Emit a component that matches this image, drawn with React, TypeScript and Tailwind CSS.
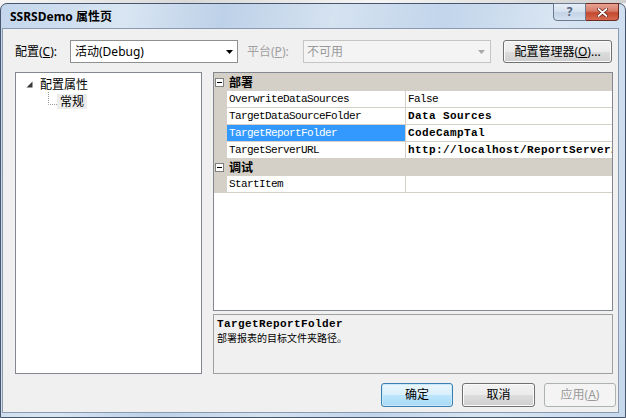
import type { ReactNode } from "react";

const ui = "font-['Noto_Sans','Noto_Sans_CJK_SC',sans-serif]";
const mono = "font-['Liberation_Mono','Noto_Sans_CJK_SC',monospace]";

function DropArrow({ color = "#000" }: { color?: string }) {
  return (
    <svg width="7" height="4" viewBox="0 0 7 4">
      <path d="M0 0h7L3.5 4z" fill={color} />
    </svg>
  );
}

function Button({
  children,
  w,
  kind = "normal",
}: {
  children: ReactNode;
  w: string;
  kind?: "normal" | "default" | "disabled";
}) {
  const look =
    kind === "default"
      ? "border-[#3c7fb1] bg-[linear-gradient(#eaf6fd_0%,#d9f0fc_50%,#bee6fd_50%,#a7d9f5_100%)] text-black shadow-[inset_0_0_0_1px_#c9e9fb]"
      : kind === "disabled"
        ? "border-[#adb2b5] bg-[#f4f4f4] text-[#9a9a9a]"
        : "border-[#707070] bg-[linear-gradient(#f2f2f2_0%,#ebebeb_50%,#dddddd_50%,#cfcfcf_100%)] text-black shadow-[inset_0_0_0_1px_#fbfbfb]";
  return (
    <div
      className={`${w} flex h-full items-center justify-center rounded-[3px] border text-[12px] ${look}`}
    >
      {children}
    </div>
  );
}

function Category({ label }: { label: string }) {
  return (
    <div className="flex h-[17px] items-center bg-[#d4d0c8]">
      <span className="ml-[1px] flex h-[9px] w-[9px] items-center justify-center border border-[#808080] bg-white">
        <span className="h-px w-[5px] bg-black" />
      </span>
      <span className={`${ui} ml-[5px] text-[12px] leading-[17px] font-bold text-black`}>{label}</span>
    </div>
  );
}

function PropRow({
  name,
  value,
  bold,
  selected,
}: {
  name: string;
  value: string;
  bold?: boolean;
  selected?: boolean;
}) {
  return (
    <div className="flex h-[17px]">
      <div className="w-[13px] shrink-0 bg-[#d4d0c8]" />
      <div
        className={`w-[179px] shrink-0 border-r border-b border-[#d4d0c8] pl-[2px] leading-[16px] tracking-[-0.6px] ${
          selected ? "bg-[#3399ff] text-white" : "bg-white text-black"
        }`}
      >
        {name}
      </div>
      <div
        className={`min-w-0 flex-1 overflow-hidden border-b border-[#d4d0c8] bg-white pl-[2px] leading-[16px] whitespace-nowrap ${
          bold ? "font-bold tracking-[0.4px]" : "tracking-[-0.6px]"
        }`}
      >
        {value}
      </div>
    </div>
  );
}

export default function App() {
  return (
    <div className={`${ui} h-[418px] w-[626px] overflow-hidden bg-[#eef0f3] text-black`}>
      {/* window behind */}
      <div className="h-[3px] bg-[linear-gradient(90deg,#f5f5f5,#d9d9d9_30%,#f5f5f5_60%,#cfcfcf)]" />

      {/* dialog frame */}
      <div className="flex h-[415px] flex-col rounded-t-[7px] border border-[#48566b] bg-[linear-gradient(100deg,#c3d6ec_0%,#d9e5f2_18%,#bdd1e8_32%,#d5e2f0_48%,#c2d5eb_64%,#d9e5f2_80%,#c6d8ec_100%)]">
        {/* title bar */}
        <div className="flex h-[24px] items-start pr-[6px]">
          <div className="pt-[5px] pl-[9px] text-[12px] leading-[15px] font-bold text-black">
            SSRSDemo 属性页
          </div>
          <div className="mt-[-1px] ml-auto flex h-[18px]">
            <div className="flex w-[33px] items-center justify-center rounded-bl-[4px] border border-[#6a7a90] bg-[linear-gradient(#e6eef7_0%,#d6e2ef_45%,#c3d3e6_55%,#d4e1ef_100%)] text-[12px] leading-none font-bold text-[#54657d]">
              ?
            </div>
            <div className="flex w-[33px] items-center justify-center rounded-br-[4px] border border-l-0 border-[#6b2a22] bg-[linear-gradient(#e8a393_0%,#d57a66_45%,#c3482f_55%,#d66a4f_100%)]">
              <svg width="11" height="9" viewBox="0 0 11 9">
                <path d="M1.5 1l8 7M9.5 1l-8 7" stroke="#5a1a12" strokeWidth="3.2" strokeLinecap="round" />
                <path d="M1.5 1l8 7M9.5 1l-8 7" stroke="#fff" strokeWidth="1.8" strokeLinecap="round" />
              </svg>
            </div>
          </div>
        </div>

        {/* client area */}
        <div className="mr-[6px] mb-[4px] ml-[1px] flex flex-1 flex-col border border-[#8a9bb1] bg-[#f0f0f0]">
          {/* configuration row */}
          <div className="mt-[11px] flex h-[23px] items-center pl-[12px] text-[12px]">
            <span className="w-[55px]">
              配置(<span className="underline">C</span>):
            </span>
            <div className="flex h-full w-[168px] items-center border border-[#8e8f8f] bg-white pr-[4px] pl-[4px]">
              <span>活动(Debug)</span>
              <span className="ml-auto">
                <DropArrow />
              </span>
            </div>
            <span className="ml-[9px] w-[56px] text-[#a0a0a0]">
              平台(<span className="underline">P</span>):
            </span>
            <div className="flex h-full w-[188px] items-center border border-[#c5c5c5] bg-[#f4f4f4] pr-[5px] pl-[3px] text-[#9a9a9a]">
              <span>不可用</span>
              <span className="ml-auto">
                <DropArrow color="#a8a8a8" />
              </span>
            </div>
            <div className="ml-[12px] h-full">
              <Button w="w-[109px]">
                配置管理器(<span className="underline">O</span>)...
              </Button>
            </div>
          </div>

          {/* main area */}
          <div className="mt-[9px] flex h-[302px] pl-[12px]">
            {/* tree */}
            <div className="w-[187px] border border-[#828790] bg-white pt-[3px] text-[12px]">
              <div className="flex h-[17px] items-center pl-[10px]">
                <svg width="7" height="7" viewBox="0 0 7 7">
                  <path d="M6.5 0.5V6.5H0.5Z" fill="#3a3a3a" />
                </svg>
                <span className="ml-[7px] leading-[17px]">配置属性</span>
              </div>
              <div className="flex h-[17px] items-center pl-[32px]">
                <svg width="9" height="17" viewBox="0 0 9 17" className="mt-[-3px]">
                  <path d="M0.5 0V12.5H9" stroke="#9a9a9a" strokeDasharray="1 1" fill="none" />
                </svg>
                <span className="bg-[#ececec] px-[3px] leading-[15px]">常规</span>
              </div>
            </div>

            {/* right column */}
            <div className="ml-[11px] flex w-[400px] flex-col gap-[3px]">
              {/* property grid */}
              <div className={`${mono} flex-1 border border-[#828790] bg-white text-[11px]`}>
                <div className="h-px bg-[#d4d0c8]" />
                <Category label="部署" />
                <PropRow name="OverwriteDataSources" value="False" />
                <PropRow name="TargetDataSourceFolder" value="Data Sources" bold />
                <PropRow name="TargetReportFolder" value="CodeCampTal" bold selected />
                <PropRow name="TargetServerURL" value="http://localhost/ReportServer2008" bold />
                <Category label="调试" />
                <PropRow name="StartItem" value="" />
              </div>

              {/* description */}
              <div className="h-[60px] border border-[#a0a0a0] bg-[#f0f0f0] pt-[3px] pl-[3px]">
                <div className={`${mono} text-[11px] leading-[13px] font-bold tracking-[0.4px]`}>
                  TargetReportFolder
                </div>
                <div className="text-[10px] leading-[15px]">部署报表的目标文件夹路径。</div>
              </div>
            </div>
          </div>

          {/* buttons */}
          <div className="mt-[9px] flex h-[24px] justify-end gap-[9px] pr-[2px]">
            <Button w="w-[72px]" kind="default">
              确定
            </Button>
            <Button w="w-[73px]">取消</Button>
            <Button w="w-[72px]" kind="disabled">
              应用(<span className="underline">A</span>)
            </Button>
          </div>
        </div>
      </div>
    </div>
  );
}
